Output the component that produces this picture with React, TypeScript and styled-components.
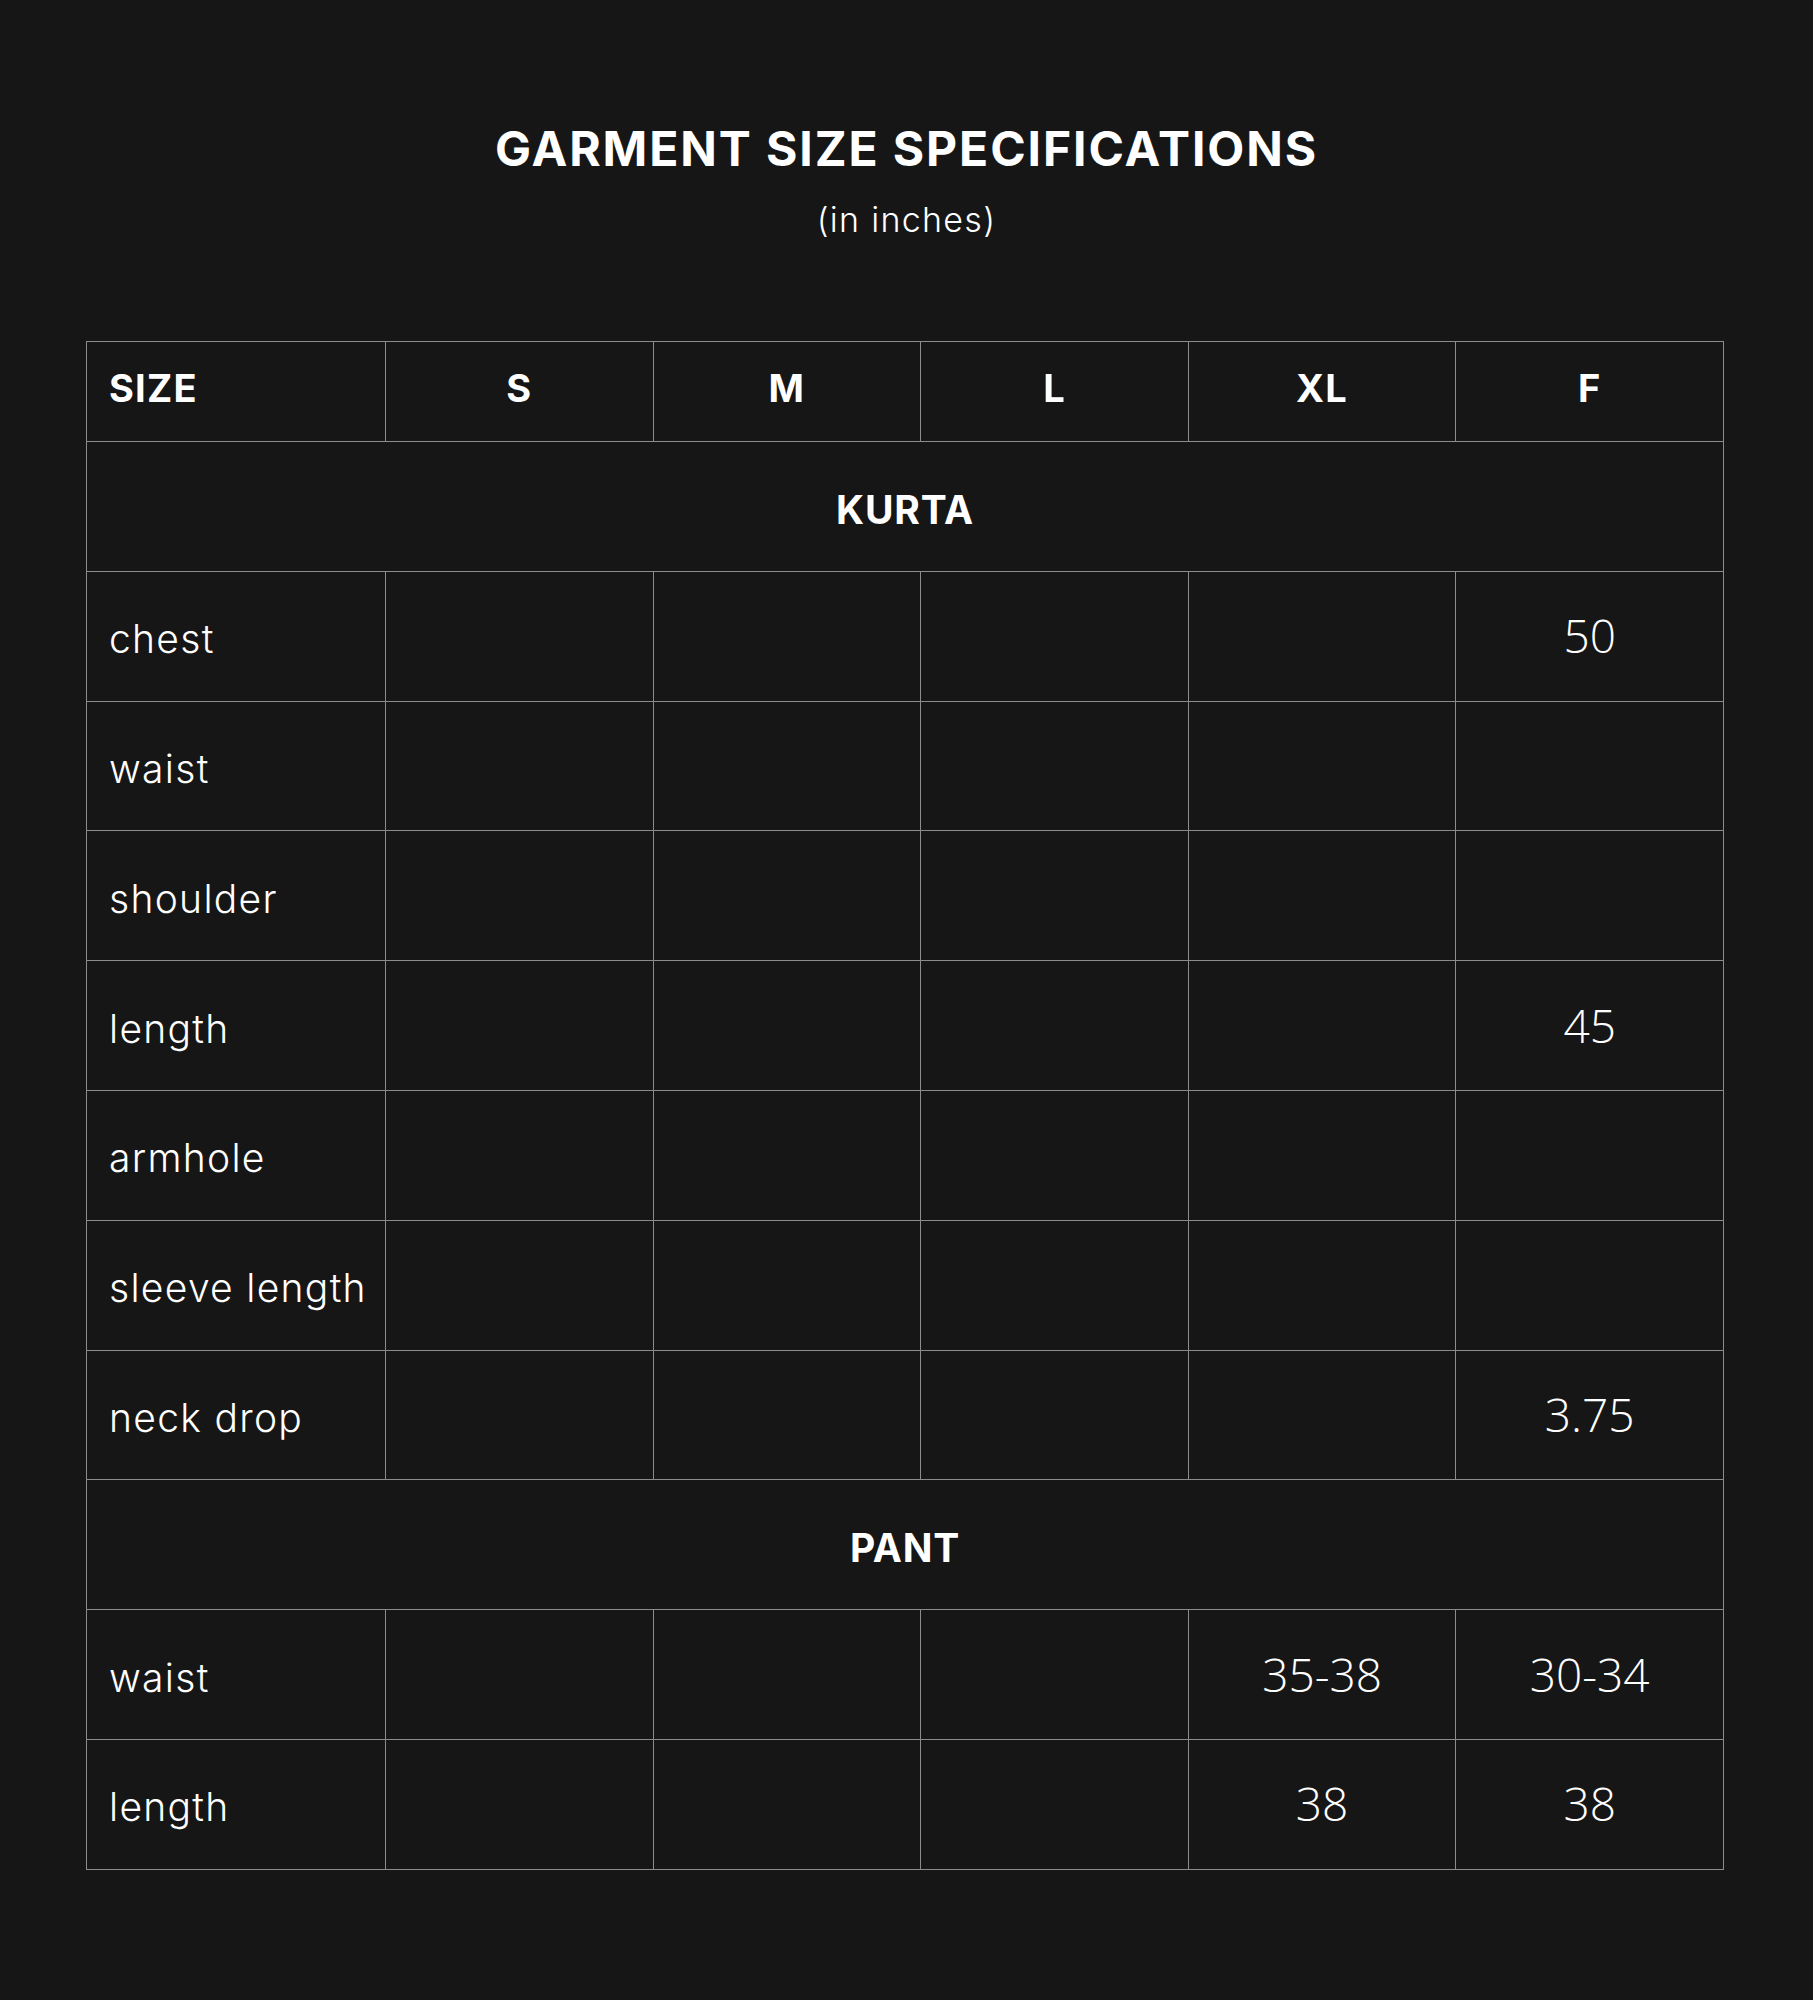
import React from 'react';
import styled, { createGlobalStyle } from 'styled-components';

const GlobalStyle = createGlobalStyle`
  html, body {
    margin: 0;
    padding: 0;
    background: #161616;
  }
  body {
    font-family: 'Inter', 'Liberation Sans', sans-serif;
    color: #ffffff;
  }
`;

const Page = styled.main`
  width: 100%;
  min-height: 2000px;
  background: #161616;
  display: flex;
  flex-direction: column;
  align-items: center;
  padding-top: 120px;
  box-sizing: border-box;
`;

const Title = styled.h1`
  margin: 0;
  font-family: 'Inter', 'Liberation Sans', sans-serif;
  font-weight: 700;
  font-size: 48px;
  line-height: 58px;
  letter-spacing: 1.9px;
  text-align: center;
`;

const Subtitle = styled.p`
  margin: 22px 0 0;
  font-family: 'Inter', 'Liberation Sans', sans-serif;
  font-weight: 300;
  font-size: 34px;
  line-height: 40px;
  letter-spacing: 1.3px;
  text-align: center;
`;

const Table = styled.table`
  align-self: flex-start;
  margin: 101px 0 0 86px;
  width: 1638px;
  border-collapse: collapse;
  table-layout: fixed;
`;

const Row = styled.tr<{ $head?: boolean }>`
  height: ${(p) => (p.$head ? '100px' : '129.8px')};
`;

const Cell = styled.td<{ $align?: 'left' | 'center' }>`
  border: 1px solid #8c8c8c;
  padding: 0;
  text-align: ${(p) => p.$align ?? 'center'};
  vertical-align: middle;
`;

const HeadCell = styled(Cell).attrs({ as: 'th' })`
  font-family: 'Inter', 'Liberation Sans', sans-serif;
  font-weight: 700;
  font-size: 38px;
  letter-spacing: 1.2px;
  padding-left: ${(p) => (p.$align === 'left' ? '22px' : '0')};
  padding-bottom: 8px;
`;

const SectionCell = styled(Cell)`
  font-family: 'Inter', 'Liberation Sans', sans-serif;
  font-weight: 700;
  font-size: 39px;
  letter-spacing: 0.8px;
  padding-top: 6px;
`;

const Label = styled(Cell)`
  font-family: 'Inter', 'Liberation Sans', sans-serif;
  font-weight: 300;
  font-size: 39px;
  letter-spacing: 1.3px;
  padding-left: 22px;
  padding-top: 5px;
  white-space: nowrap;
`;

const Value = styled(Cell)`
  font-family: 'Open Sans', 'Liberation Sans', sans-serif;
  font-weight: 300;
  font-size: 46px;
  padding-bottom: 2px;
`;

const sizes = ['S', 'M', 'L', 'XL', 'F'];

type Section = {
  name: string;
  rows: { label: string; values: string[] }[];
};

const sections: Section[] = [
  {
    name: 'KURTA',
    rows: [
      { label: 'chest', values: ['', '', '', '', '50'] },
      { label: 'waist', values: ['', '', '', '', ''] },
      { label: 'shoulder', values: ['', '', '', '', ''] },
      { label: 'length', values: ['', '', '', '', '45'] },
      { label: 'armhole', values: ['', '', '', '', ''] },
      { label: 'sleeve length', values: ['', '', '', '', ''] },
      { label: 'neck drop', values: ['', '', '', '', '3.75'] },
    ],
  },
  {
    name: 'PANT',
    rows: [
      { label: 'waist', values: ['', '', '', '35-38', '30-34'] },
      { label: 'length', values: ['', '', '', '38', '38'] },
    ],
  },
];

export default function App() {
  return (
    <>
      <GlobalStyle />
      <Page>
        <Title>GARMENT SIZE SPECIFICATIONS</Title>
        <Subtitle>(in inches)</Subtitle>
        <Table>
          <colgroup>
            <col style={{ width: 299 }} />
            {sizes.map((s) => (
              <col key={s} />
            ))}
          </colgroup>
          <thead>
            <Row $head>
              <HeadCell $align="left">SIZE</HeadCell>
              {sizes.map((s) => (
                <HeadCell key={s}>{s}</HeadCell>
              ))}
            </Row>
          </thead>
          <tbody>
            {sections.map((sec) => (
              <React.Fragment key={sec.name}>
                <Row>
                  <SectionCell colSpan={6}>{sec.name}</SectionCell>
                </Row>
                {sec.rows.map((r) => (
                  <Row key={sec.name + r.label}>
                    <Label $align="left">{r.label}</Label>
                    {r.values.map((v, i) => (
                      <Value key={i}>{v}</Value>
                    ))}
                  </Row>
                ))}
              </React.Fragment>
            ))}
          </tbody>
        </Table>
      </Page>
    </>
  );
}
